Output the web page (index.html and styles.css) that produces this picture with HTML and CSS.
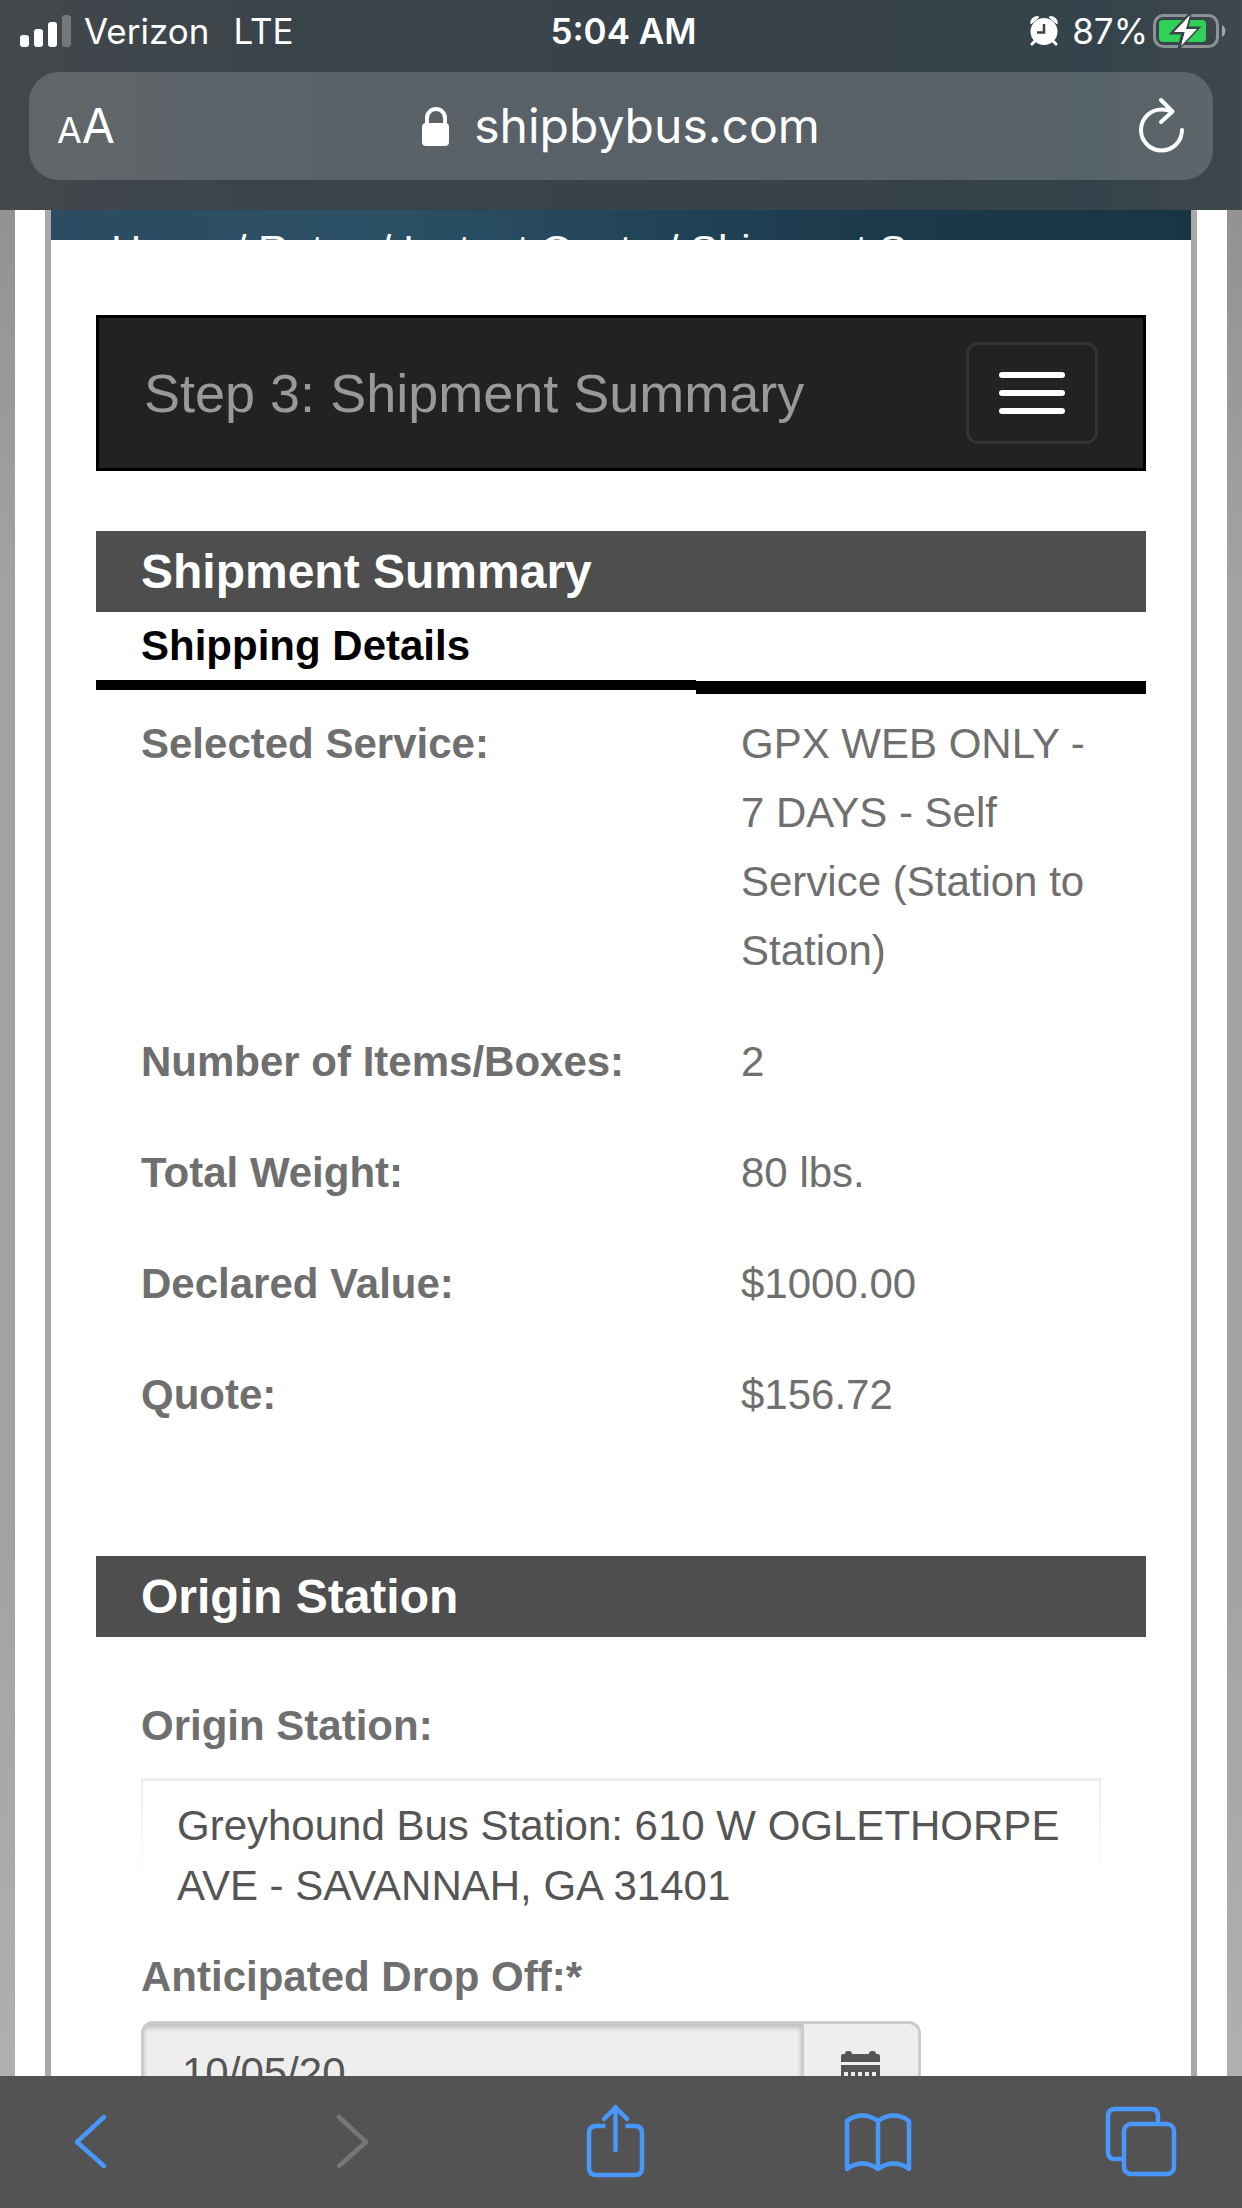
FILE: index.html
```html
<!DOCTYPE html>
<html lang="en">
<head>
    <meta charset="utf-8">
    <meta name="viewport" content="width=device-width, initial-scale=1">
    <title>Shipment Summary - shipbybus.com</title>
    <link rel="stylesheet" href="styles.css">
</head>
<body>
    <header class="browser-top">
        <div class="status-bar">
            <div class="status-left">
                <svg class="signal" width="52" height="32" viewBox="0 0 52 32" fill="#fff">
                    <rect x="0" y="20" width="9" height="12" rx="3"/>
                    <rect x="14" y="14" width="9" height="18" rx="3"/>
                    <rect x="28" y="7" width="9" height="25" rx="3"/>
                    <rect x="42" y="0" width="9" height="32" rx="3" opacity=".27"/>
                </svg>
                <span>Verizon</span>
                <span class="network">LTE</span>
            </div>
            <div class="clock">5:04 AM</div>
            <div class="status-right">
                <svg class="alarm" width="28" height="30" viewBox="0 0 28 30">
                    <path d="M1 8a6 6 0 0 1 8-7zM27 8a6 6 0 0 0-8-7z" fill="#fff" stroke="#fff" stroke-linejoin="round"/>
                    <path d="M6 24l-4 4M22 24l4 4" stroke="#fff" stroke-width="3" stroke-linecap="round"/>
                    <circle cx="14" cy="15.5" r="13.5" fill="#fff"/>
                    <path d="M14 8v8.500H7" fill="none" stroke="#39444b" stroke-width="2.500"/>
                </svg>
                <span>87%</span>
                <svg class="battery" width="74" height="36" viewBox="0 0 74 36">
                    <rect x="1.500" y="2.500" width="63" height="31" rx="9" fill="none" stroke="#8c9295" stroke-width="3"/>
                    <path d="M69 12a7 7 0 0 1 0 12z" fill="#a3a8aa"/>
                    <rect x="6" y="7" width="47" height="22" rx="4" fill="#30d158"/>
                    <path d="M37 1L19 20h11l-4 15 19-20H34z" fill="#fff" stroke="#39444b" stroke-width="3"/>
                    <path d="M37 2L21 19h11l-4 14 16-17H33z" fill="#fff"/>
                </svg>
            </div>
        </div>
        <div class="address-bar">
            <button class="reader" type="button" aria-label="Page settings"><small>A</small>A</button>
            <a class="site" href="#">
                <svg width="28" height="40" viewBox="0 0 28 40">
                    <path d="M5 20V12a9 9 0 0 1 18 0v8" fill="none" stroke="#fff" stroke-width="4"/>
                    <rect x="0" y="17" width="27" height="23" rx="4" fill="#fff"/>
                </svg>
                shipbybus.com
            </a>
            <button class="reload" type="button" aria-label="Reload">
                <svg width="46" height="56" viewBox="0 0 46 56" fill="none" stroke="#fff" stroke-width="4" stroke-linecap="round" stroke-linejoin="round">
                    <path d="M43 32A20.500 20.500 0 1 1 22.500 11.500Q28 11.500 33 13.500"/>
                    <path d="M22 2l11.500 11.500L22 24"/>
                </svg>
            </button>
        </div>
    </header>

    <div class="viewport">
        <div class="page">
            <main class="content">
                <nav class="breadcrumb">
                    <a href="#">Home</a> / <a href="#">Rates</a> / <a href="#">Instant Quote</a> / Shipment Summary
                </nav>

                <div class="body">
                    <div class="navbar">
                        <span class="navbar-brand">Step 3: Shipment Summary</span>
                        <button class="navbar-toggle" type="button" aria-label="Toggle navigation">
                            <span></span>
                            <span></span>
                            <span></span>
                        </button>
                    </div>

                    <section class="summary">
                        <h2>Shipment Summary</h2>
                        <div class="subhead">
                            <h3>Shipping Details</h3>
                            <div class="subhead-rest"></div>
                        </div>
                        <dl class="details">
                            <dt>Selected Service:</dt>
                            <dd>GPX WEB ONLY - 7 DAYS - Self Service (Station to Station)</dd>
                            <dt>Number of Items/Boxes:</dt>
                            <dd>2</dd>
                            <dt>Total Weight:</dt>
                            <dd>80 lbs.</dd>
                            <dt>Declared Value:</dt>
                            <dd>$1000.00</dd>
                            <dt>Quote:</dt>
                            <dd>$156.72</dd>
                        </dl>
                    </section>

                    <section>
                        <h2>Origin Station</h2>
                        <form class="origin">
                            <div class="label">Origin Station:</div>
                            <div class="station">Greyhound Bus Station: 610 W OGLETHORPE AVE - SAVANNAH, GA 31401</div>
                            <label class="label" for="dropoff">Anticipated Drop Off:*</label>
                            <div class="input-group">
                                <input type="text" id="dropoff" value="10/05/20" readonly>
                                <button type="button" aria-label="Choose date">
                                    <svg width="40" height="42" viewBox="0 0 40 42" fill="#555">
                                        <path d="M0 5q0-2 2-2h2q0-3 3-3h1q3 0 3 3h17q0-3 3-3h1q3 0 3 3h2q2 0 2 2v6H0z"/>
                                        <path d="M0 14h39v26q0 2-2 2H2q-2 0-2-2z"/>
                                        <path d="M3 21h4v4H3zM10 21h4v4h-4zM17 21h4v4h-4zM24 21h4v4h-4zM31 21h4v4h-4zM3 28h4v4H3zM10 28h4v4h-4zM17 28h4v4h-4zM24 28h4v4h-4zM31 28h4v4h-4z" fill="#eee"/>
                                    </svg>
                                </button>
                            </div>
                        </form>
                    </section>
                </div>
            </main>
        </div>
    </div>

    <footer class="toolbar">
        <button type="button" aria-label="Back">
            <svg width="70" height="70" viewBox="0 0 70 70"><path d="M48 10L21 35l27 24"/></svg>
        </button>
        <button type="button" aria-label="Forward" disabled>
            <svg width="70" height="70" viewBox="0 0 70 70"><path d="M20 10l27 25-27 24"/></svg>
        </button>
        <button type="button" aria-label="Share">
            <svg width="70" height="70" viewBox="0 0 70 70">
                <path d="M24.500 19H15q-7 0-7 7v35q0 7 7 7h39q7 0 7-7V26q0-7-7-7h-9.500" stroke-linecap="butt"/>
                <path d="M34.500 43V0M23 12L34.500 0.500l11.500 11.500"/>
            </svg>
        </button>
        <button type="button" aria-label="Bookmarks">
            <svg width="70" height="70" viewBox="0 0 70 70">
                <path d="M34 62Q18 51 3 62V14Q18 3 34 14Q50 3 65 14V62Q50 51 34 62V14"/>
            </svg>
        </button>
        <button type="button" aria-label="Tabs">
            <svg width="70" height="70" viewBox="0 0 70 70">
                <rect x="18" y="17" width="50" height="50" rx="7"/>
                <path d="M52 16V9q0-7-7-7H9Q2 2 2 9v36q0 7 7 7h8" stroke-linecap="butt"/>
            </svg>
        </button>
    </footer>
</body>
</html>
```

FILE: styles.css
```css
* { box-sizing: border-box; }
body { margin: 0; height: 100vh; display: flex; flex-direction: column; font-family: "Liberation Sans", Arial, sans-serif; font-size: 42px; line-height: 69px; color: #6f6f6f; }
button { border: 0; padding: 0; background: none; font: inherit; color: inherit; }
svg { display: block; overflow: visible; }
a { color: inherit; text-decoration: none; }
h2, h3, dl, dd { margin: 0; }

/* browser chrome */
.browser-top { flex: none; padding-bottom: 30px; background: linear-gradient(90deg, #43484b, #39434a 25%, #37424a 70%, #34434b 88%, #3f484b); font-family: Inter, "Liberation Sans", sans-serif; color: #fff; }
.status-bar { display: grid; grid-template-columns: 1fr auto 1fr; align-items: center; height: 62px; margin-bottom: 10px; padding: 0 15px 0 20px; font-size: 35px; line-height: 42px; }
.status-left, .status-right { display: flex; align-items: center; }
.status-right { justify-content: flex-end; }
.signal { margin-right: 12px; }
.network { margin-left: 24px; }
.clock { font-weight: 600; }
.alarm { margin-right: 14px; }
.battery { margin-left: 5px; }
.address-bar { display: grid; grid-template-columns: 1fr auto 1fr; align-items: center; height: 108px; margin: 0 29px; padding: 0 28px; border-radius: 30px; background: rgba(255, 255, 255, 0.17); }
.reader { justify-self: start; padding-top: 4px; font-size: 48px; line-height: 60px; }
.reader small { font-size: 36px; }
.site { display: flex; align-items: center; gap: 24px; font-size: 48px; line-height: 60px; }
.reload { justify-self: end; }

/* web page */
.viewport { flex: 1; min-height: 0; overflow: hidden; padding: 0 15px; background: linear-gradient(#929292, #a2a2a2 20%, #a2a2a2 70%, #b0b0b0); }
.page { padding: 0 30px; background: #fff; }
.content { border: solid #a9a9a9; border-width: 0 6px; }
.breadcrumb { height: 30px; padding: 6px 60px 0; overflow: hidden; white-space: nowrap; background: linear-gradient(90deg, #2c4c63, #2b5066 30%, #1b3a4c 70%, #193543); color: #fff; }
.body { padding: 75px 45px; }
.navbar { display: flex; align-items: center; justify-content: space-between; margin-bottom: 60px; padding: 24px 45px; border: 3px solid #000; background: #222; }
.navbar-brand { font-size: 54px; line-height: 60px; color: #999; }
.navbar-toggle { display: grid; gap: 12px; padding: 27px 30px; border: 3px solid #333; border-radius: 12px; }
.navbar-toggle span { width: 66px; height: 6px; border-radius: 3px; background: #fff; }
h2 { padding: 0 45px; background: #4e4e4e; color: #fff; font-size: 48px; line-height: 81px; }

.summary { margin-bottom: 85px; }
.subhead, .details { display: grid; grid-template-columns: 4fr 3fr; align-items: start; }
h3 { padding-left: 45px; border-bottom: 10px solid #000; font-size: 42px; line-height: 68px; color: #000; }
.subhead-rest { height: 82px; border-bottom: 13px solid #000; }
.details { padding-top: 15px; }
.details dt, .details dd { padding: 0 45px 42px; }
.details dt { padding-right: 0; font-weight: bold; }

.origin { padding: 54px 45px; }
.label { display: block; font-weight: bold; }
.station { margin: 18px 0 26px; padding: 15px 36px 0; border-top: 3px solid #eee; background: linear-gradient(#eee, #fff) left top / 2px 100px no-repeat, linear-gradient(#eee, #fff) right top / 2px 100px no-repeat; line-height: 60px; color: #555; }
.input-group { display: flex; width: 780px; max-width: 100%; height: 102px; margin-top: 10px; border: 3px solid #ccc; border-radius: 12px; background: #eee; overflow: hidden; }
.input-group input { flex: 1; min-width: 0; padding: 0 38px; border: 0; border-right: 3px solid #ccc; background: none; box-shadow: inset 0 4px 5px rgba(0, 0, 0, 0.2); font: inherit; color: #555; }
.input-group button { display: flex; align-items: center; justify-content: center; width: 114px; }

.toolbar { flex: none; display: flex; align-items: center; justify-content: space-between; height: 132px; padding: 0 66px 0 56px; background: #535353; }
.toolbar svg { fill: none; stroke: #4897fd; stroke-width: 4.500; stroke-linecap: round; stroke-linejoin: round; }
.toolbar button:disabled svg { stroke: #777; }
```
